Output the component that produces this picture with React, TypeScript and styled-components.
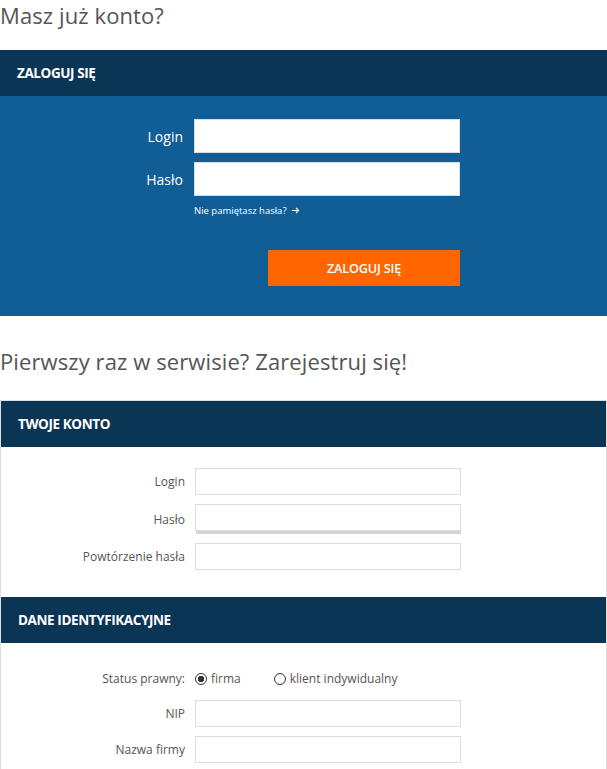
import { FC } from "react";
import styled, { createGlobalStyle, css } from "styled-components";

const GlobalStyle = createGlobalStyle`
  * { box-sizing: border-box; }
  body {
    margin: 0;
    background: #fff;
    font-family: "Open Sans", "DejaVu Sans", sans-serif;
    color: #555;
  }
`;

const Page = styled.div`
  width: 607px;
`;

const Title = styled.h1<{ $space: number }>`
  margin: 0;
  font-weight: 400;
  font-size: 22px;
  line-height: 30px;
  color: #555;
  letter-spacing: 0.1px;
  padding-bottom: ${(p) => p.$space}px;
`;

const BarHeader = styled.div`
  background: #0b3555;
  height: 46px;
  display: flex;
  align-items: center;
  padding-left: 17px;
  color: #fff;
  font-weight: 700;
  font-size: 13.5px;
  letter-spacing: -0.4px;
  text-transform: uppercase;
`;

const LoginBody = styled.div`
  background: #115d95;
  padding: 23px 0 30px;
  display: flex;
  flex-direction: column;
  gap: 9px;
`;

const Row = styled.div<{ $labelWidth: number; $gap: number }>`
  display: grid;
  grid-template-columns: ${(p) => p.$labelWidth}px 266px;
  column-gap: ${(p) => p.$gap}px;
  align-items: center;
`;

const Label = styled.label<{ $light?: boolean }>`
  text-align: right;
  ${(p) =>
    p.$light
      ? css`
          color: #fff;
          font-size: 14px;
        `
      : css`
          color: #555;
          font-size: 12px;
        `}
`;

const Field = styled.input<{ $tall?: boolean }>`
  display: block;
  width: 100%;
  margin: 0;
  background: #fff;
  outline: none;
  font: inherit;
  border: 1px solid #dcdcdc;
  height: ${(p) => (p.$tall ? 34 : 27)}px;
`;

const Forgot = styled.a`
  grid-column: 2;
  color: #fff;
  font-size: 9.5px;
  text-decoration: none;
  margin-top: 8px;
  display: flex;
  align-items: center;
  gap: 5px;
`;

const ButtonRow = styled.div`
  display: flex;
  justify-content: flex-end;
  width: 460px;
  margin-top: 24px;
`;

const OrangeButton = styled.button`
  width: 192px;
  height: 36px;
  border: none;
  background: #ff6600;
  color: #fff;
  font-family: inherit;
  font-weight: 600;
  font-size: 12.7px;
  letter-spacing: -0.2px;
`;

const Panel = styled.div`
  border: 1px solid #dedede;
  border-bottom: none;
`;

const PanelBody = styled.div<{ $pt: number; $pb: number }>`
  padding: ${(p) => p.$pt}px 0 ${(p) => p.$pb}px;
  display: flex;
  flex-direction: column;
  gap: 9px;
`;

const Meter = styled.div`
  height: 3px;
  margin-left: 1px;
  background: #d4d4d4;
`;

const Radios = styled.div`
  display: flex;
  align-items: center;
  font-size: 12px;
  color: #555;
  height: 25px;
`;

const Radio = styled.span<{ $checked?: boolean }>`
  display: inline-flex;
  align-items: center;
  gap: 4px;
  margin-right: ${(p) => (p.$checked ? 33 : 0)}px;
  &::before {
    content: "";
    width: 12px;
    height: 12px;
    border-radius: 50%;
    border: 1px solid #333;
    box-sizing: border-box;
    background: ${(p) =>
      p.$checked ? "radial-gradient(circle, #333 0 3px, #fff 3.4px)" : "#fff"};
  }
`;

const RightArrow: FC = () => (
  <svg width="8" height="7" viewBox="0 0 8 7" fill="none">
    <path d="M0 3.5h6.5M4 1l2.5 2.5L4 6" stroke="#fff" strokeWidth="1.2" />
  </svg>
);

export default function App() {
  return (
    <Page>
      <GlobalStyle />
      <Title $space={20}>Masz już konto?</Title>
      <BarHeader>Zaloguj się</BarHeader>
      <LoginBody>
        <Row $labelWidth={183} $gap={11}>
          <Label $light>Login</Label>
          <Field $tall />
        </Row>
        <Row $labelWidth={183} $gap={11}>
          <Label $light>Hasło</Label>
          <Field $tall type="password" />
          <Forgot href="#">
            Nie pamiętasz hasła? <RightArrow />
          </Forgot>
        </Row>
        <ButtonRow>
          <OrangeButton>ZALOGUJ SIĘ</OrangeButton>
        </ButtonRow>
      </LoginBody>
      <Title $space={24} style={{ marginTop: 30 }}>
        Pierwszy raz w serwisie? Zarejestruj się!
      </Title>
      <Panel>
        <BarHeader>Twoje konto</BarHeader>
        <PanelBody $pt={21} $pb={27}>
          <Row $labelWidth={184} $gap={10}>
            <Label>Login</Label>
            <Field />
          </Row>
          <Row $labelWidth={184} $gap={10}>
            <Label>Hasło</Label>
            <div>
              <Field type="password" />
              <Meter />
            </div>
          </Row>
          <Row $labelWidth={184} $gap={10}>
            <Label>Powtórzenie hasła</Label>
            <Field type="password" />
          </Row>
        </PanelBody>
        <BarHeader>Dane identyfikacyjne</BarHeader>
        <PanelBody $pt={23} $pb={10}>
          <Row $labelWidth={184} $gap={10}>
            <Label>Status prawny:</Label>
            <Radios>
              <Radio $checked>firma</Radio>
              <Radio>klient indywidualny</Radio>
            </Radios>
          </Row>
          <Row $labelWidth={184} $gap={10}>
            <Label>NIP</Label>
            <Field />
          </Row>
          <Row $labelWidth={184} $gap={10}>
            <Label>Nazwa firmy</Label>
            <Field />
          </Row>
        </PanelBody>
      </Panel>
    </Page>
  );
}
